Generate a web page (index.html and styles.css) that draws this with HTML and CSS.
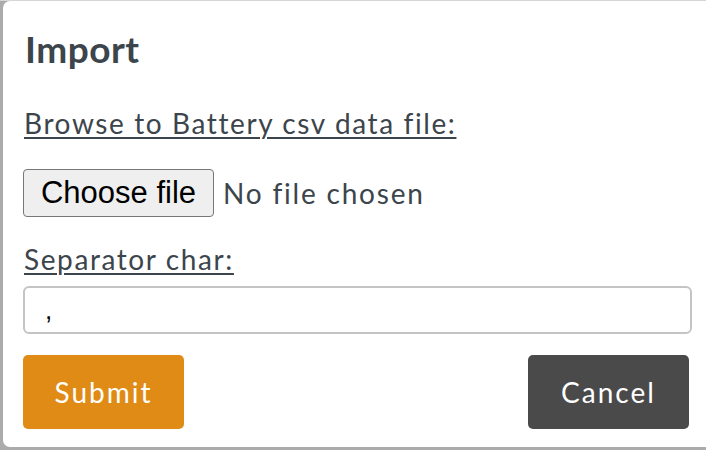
FILE: index.html
```html
<!DOCTYPE html>
<html lang="en">
<head>
<meta charset="utf-8">
<title>Import</title>
<link rel="stylesheet" href="styles.css">
</head>
<body>
<div class="modal">
  <h1 class="title">Import</h1>
  <form class="form">
    <label class="label label-file">Browse to Battery csv data file:</label>
    <div class="file-row">
      <button type="button" class="file-btn">Choose file</button>
      <span class="file-name">No file chosen</span>
    </div>
    <label class="label label-sep">Separator char:</label>
    <input class="sep-input" type="text" value=",">
    <div class="actions">
      <button type="button" class="btn btn-submit">Submit</button>
      <button type="button" class="btn btn-cancel">Cancel</button>
    </div>
  </form>
</div>
</body>
</html>
```
FILE: styles.css
```css
html, body {
  margin: 0;
  padding: 0;
  height: 100%;
  overflow: hidden;
}
body {
  background: #ababab;
  border-top: 1px solid #d6d6d6;
  box-sizing: border-box;
  font-family: Lato, "Open Sans", sans-serif;
  color: #3c454c;
}
.modal {
  margin-left: 3px;
  width: 720px;
  height: 446px;
  box-sizing: border-box;
  background: #fff;
  border-radius: 7px;
  padding: 26px 0 0 20px;
}
.title {
  margin: 0 0 0 2px;
  font-size: 37px;
  line-height: 44px;
  font-weight: 700;
  letter-spacing: 0.5px;
  color: #3c454c;
}
.form {
  width: 669px;
  display: flex;
  flex-direction: column;
  align-items: flex-start;
}
.label {
  font-size: 28px;
  line-height: 32px;
  letter-spacing: 1.6px;
  text-decoration: underline;
  text-decoration-thickness: 2px;
  text-underline-offset: 3px;
  margin-left: 1px;
}
.label-file {
  margin-top: 36px;
}
.file-row {
  margin-top: 30px;
  display: flex;
  align-items: center;
  gap: 9px;
}
.file-btn {
  height: 48px;
  width: 191px;
  margin: 0;
  padding: 0;
  background: #efefef;
  border: 1.5px solid #777;
  border-radius: 4px;
  font-family: "Liberation Sans", Arial, sans-serif;
  font-size: 31px;
  color: #000;
}
.file-name {
  font-size: 28px;
  line-height: 32px;
  letter-spacing: 1.8px;
}
.label-sep {
  margin-top: 26px;
}
.sep-input {
  margin: 11px 0 0 0;
  width: 669px;
  height: 48px;
  box-sizing: border-box;
  border: 2px solid #c4c4c4;
  border-radius: 6px;
  padding: 0 0 0 20px;
  font-family: "Liberation Sans", Arial, sans-serif;
  font-size: 26px;
  color: #000;
  outline: none;
}
.actions {
  margin-top: 21px;
  width: 666px;
  display: flex;
  justify-content: space-between;
}
.btn {
  width: 161px;
  height: 74px;
  border: none;
  border-radius: 5px;
  color: #fff;
  font-family: Lato, "Open Sans", sans-serif;
  font-size: 28px;
  letter-spacing: 2px;
  padding: 0;
  margin: 0;
}
.btn-submit {
  background: #df8b16;
}
.btn-cancel {
  background: #4a4a4a;
}
```
